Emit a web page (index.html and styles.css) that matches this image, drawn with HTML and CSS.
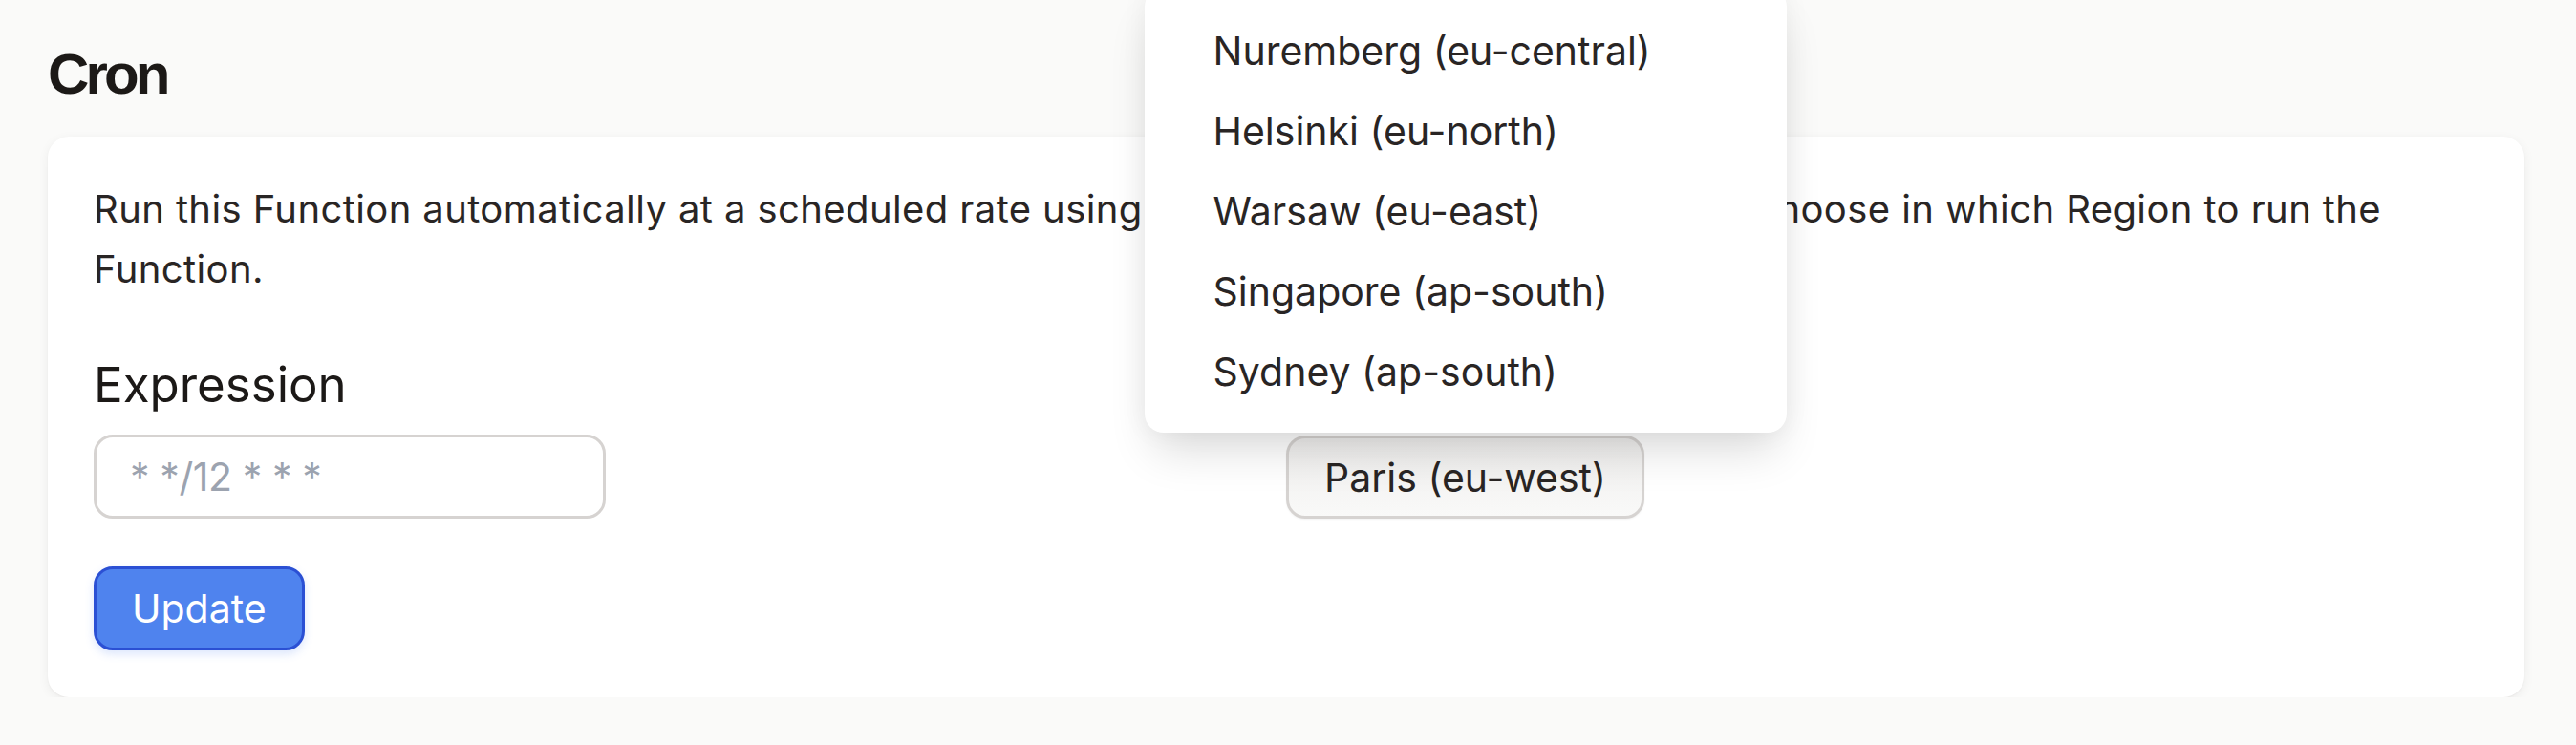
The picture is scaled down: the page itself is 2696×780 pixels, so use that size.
FILE: index.html
```html
<!DOCTYPE html>
<html lang="en">
<head>
<meta charset="utf-8">
<title>Cron</title>
<link rel="stylesheet" href="styles.css">
</head>
<body>
<main class="page">
  <h2 class="title">Cron</h2>
  <section class="card">
    <p class="intro">Run this Function automatically at a scheduled rate using a Cron expression. You can also choose in which Region to run the Function.</p>
    <form class="form">
      <div class="fields">
        <div class="field">
          <label class="label" for="expr">Expression</label>
          <input id="expr" class="input" type="text" placeholder="* */12 * * *">
        </div>
        <div class="field">
          <span class="label">Region</span>
          <div class="select">
            <button type="button" class="select-btn">Paris (eu-west)</button>
            <ul class="options">
              <li class="option">Nuremberg (eu-central)</li>
              <li class="option">Helsinki (eu-north)</li>
              <li class="option">Warsaw (eu-east)</li>
              <li class="option">Singapore (ap-south)</li>
              <li class="option">Sydney (ap-south)</li>
            </ul>
          </div>
        </div>
      </div>
      <button type="submit" class="btn-primary">Update</button>
    </form>
  </section>
</main>
</body>
</html>
```
FILE: styles.css
```css
* { box-sizing: border-box; }
html, body { margin: 0; }
body {
  background: #fafaf9;
  font-family: Inter, "Noto Sans", sans-serif;
  color: #292524;
  overflow: hidden;
}
.page { padding: 42px 54px 0 50px; }
.title {
  margin: 0 0 29px;
  font-family: "Liberation Sans", Arial, sans-serif;
  font-weight: 700;
  font-size: 60px;
  line-height: 72px;
  letter-spacing: -0.065em;
  color: #1c1917;
}
.card {
  background: #fff;
  border-radius: 22px;
  padding: 44px 48px 49px;
  box-shadow: 0 3px 12px rgba(28, 25, 23, 0.06), 0 1px 2px rgba(28, 25, 23, 0.04);
}
.intro {
  margin: 0;
  font-size: 40px;
  line-height: 63px;
  letter-spacing: 0.4px;
}
.form { margin-top: 57px; }
.fields {
  display: grid;
  grid-template-columns: 1fr 1fr;
}
.field {
  display: flex;
  flex-direction: column;
  align-items: flex-start;
  gap: 20px;
}
.label {
  font-size: 51px;
  line-height: 65px;
  color: #1c1917;
}
.input {
  width: 536px;
  height: 88px;
  border: 3px solid #d6d3d1;
  border-radius: 20px;
  padding: 0 35px;
  font: inherit;
  font-size: 41px;
  letter-spacing: -0.4px;
  color: #292524;
  background: #fff;
  outline: none;
}
.input::placeholder { color: #9ca3af; }
.select { position: relative; }
.select-btn {
  height: 87px;
  margin-top: 1px;
  padding: 0 37px;
  border: 3px solid #d6d3d1;
  border-radius: 20px;
  background: linear-gradient(#efeeed, #f9f9f8);
  font: inherit;
  font-size: 41px;
  color: #292524;
  box-shadow: 0 1px 2px rgba(0, 0, 0, 0.05);
}
.options {
  position: absolute;
  bottom: calc(100% + 2px);
  left: 50%;
  transform: translateX(-50%);
  width: 672px;
  margin: 0;
  padding: 24px 0 22px;
  list-style: none;
  background: #fff;
  border-radius: 20px;
  box-shadow: 0 28px 48px -10px rgba(0, 0, 0, 0.14), 0 0 28px rgba(0, 0, 0, 0.05);
  z-index: 10;
}
.option {
  height: 84px;
  padding: 0 72px;
  display: flex;
  align-items: center;
  font-size: 41px;
  color: #292524;
  white-space: nowrap;
}
.btn-primary {
  display: block;
  margin-top: 50px;
  height: 88px;
  padding: 0 37px;
  border: 3px solid #2b50d4;
  border-radius: 20px;
  background: #4f83ee;
  color: #fff;
  font: inherit;
  font-size: 41px;
  box-shadow: 0 4px 10px rgba(79, 131, 238, 0.2);
}
```
